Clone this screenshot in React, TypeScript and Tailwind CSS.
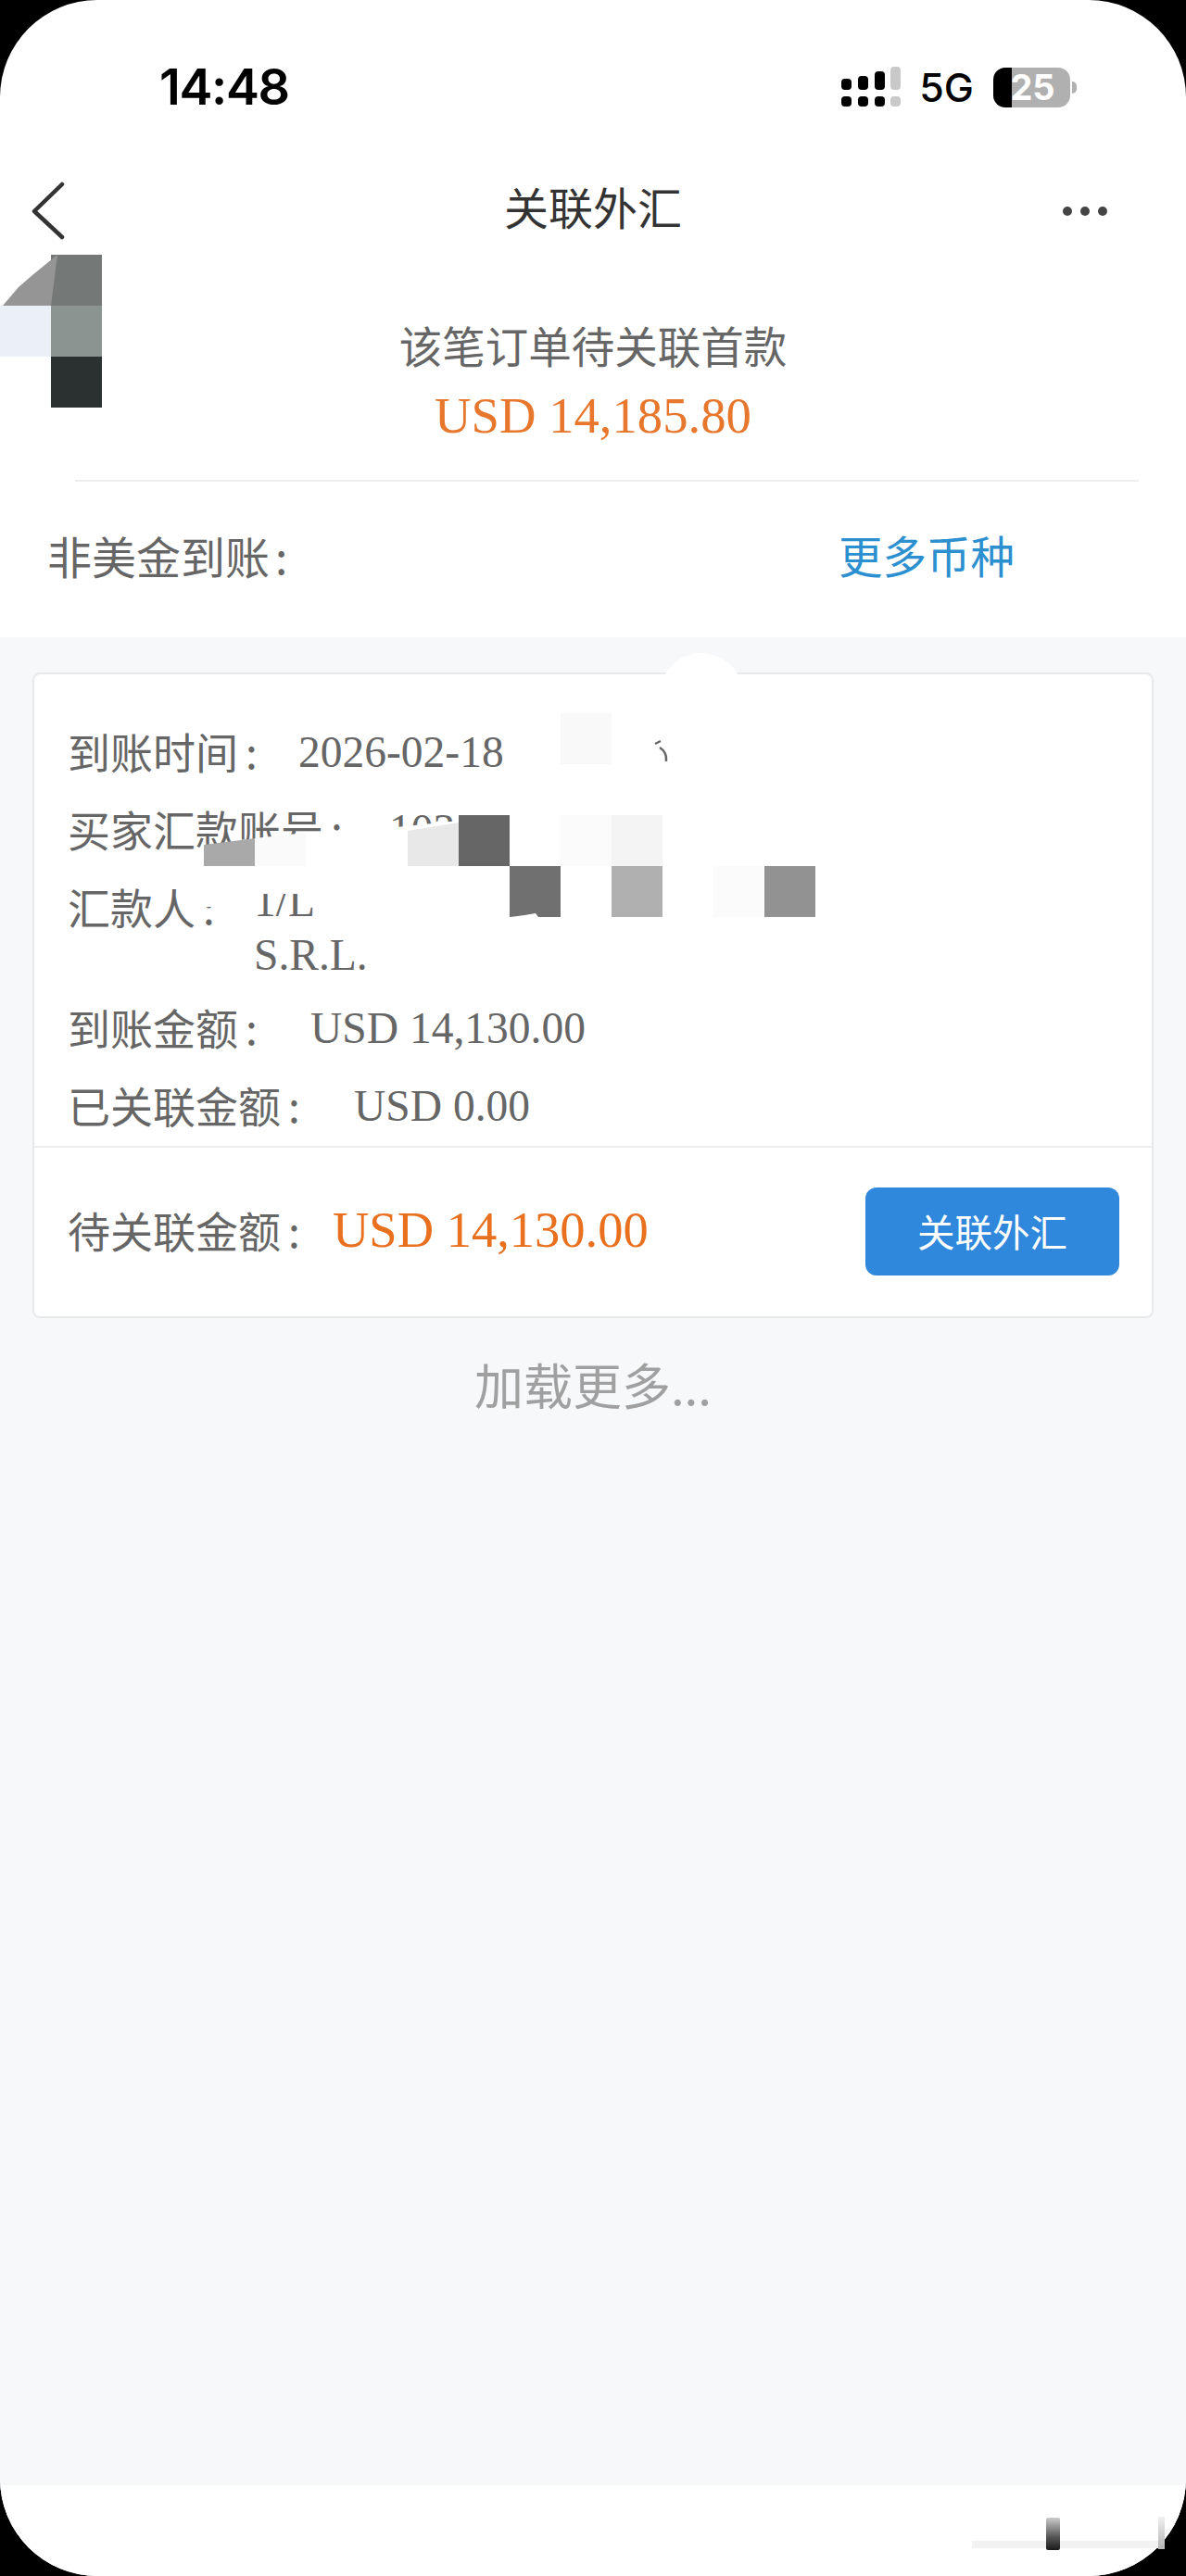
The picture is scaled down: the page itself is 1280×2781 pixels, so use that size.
import { ReactNode } from "react"

const cjk = "font-['Noto_Sans_CJK_SC','Noto_Sans',sans-serif]"
const serif = "font-['Liberation_Serif','Noto_Sans_CJK_SC',serif]"

// redaction blocks from the photo: x, y, fill
const tiles: [number, number, string][] = [
  [55, 275, "#747876"],
  [0, 330, "#ebf0f7"],
  [55, 330, "#8c9492"],
  [55, 385, "#2b3030"],
  [605, 770, "#f9f9f9"],
  [495, 880, "#666666"],
  [605, 880, "#fbfbfb"],
  [660, 880, "#f4f4f4"],
  [550, 935, "#707070"],
  [660, 935, "#b0b0b0"],
  [770, 935, "#fbfbfb"],
  [825, 935, "#929292"]
]

const Redactions = () => (
  <svg
    viewBox="0 0 1280 2781"
    className="absolute inset-0 w-[1280px] h-[2781px] pointer-events-none"
  >
    <defs>
      <linearGradient id="smudge" x1="0" y1="0" x2="0" y2="1">
        <stop offset="0" stopColor="#cccccc" />
        <stop offset="0.6" stopColor="#555555" />
        <stop offset="1" stopColor="#1a1a1a" />
      </linearGradient>
      <linearGradient id="smudgeEdge" x1="0" y1="0" x2="0" y2="1">
        <stop offset="0" stopColor="#f0f0f0" />
        <stop offset="1" stopColor="#b5b5b5" />
      </linearGradient>
    </defs>
    <circle cx="757" cy="750" r="45" fill="#ffffff" />
    <polygon points="216,915 495,886 495,964 216,964" fill="#ffffff" />
    <rect x="216" y="936" width="330" height="29" fill="#ffffff" />
    <rect x="222" y="964" width="20" height="15" fill="#ffffff" />
    {tiles.map(([x, y, fill]) => (
      <rect key={`${x}-${y}`} x={x} y={y} width="55" height="55" fill={fill} />
    ))}
    <polygon points="220,935 220,912 275,905 275,935" fill="#a9a9a9" />
    <polygon points="275,935 275,905 330,899 330,935" fill="#fafafa" />
    <polygon points="440,935 440,897 495,888 495,935" fill="#e8e8e8" />
    <polygon points="3,330 20,310 35,297 62,275 55,330" fill="#959595" />
    <polygon points="551,990 566,988 578,986 581,990" fill="#ffffff" />
    <path d="M707 803 L713 800 M712 807 Q720 812 719 822" stroke="#666666" strokeWidth="2.5" fill="none" />
    <rect x="1049" y="2743" width="208" height="8" fill="#f2f2f2" />
    <rect x="1250" y="2717" width="7" height="35" fill="url(#smudgeEdge)" />
    <rect x="1129" y="2718" width="15" height="35" rx="2" fill="url(#smudge)" />
  </svg>
)

const SignalIcon = () => (
  <svg width="64" height="44" viewBox="0 0 64 44">
    <rect x="0" y="13" width="11" height="12" rx="4" fill="#000" />
    <rect x="18" y="10" width="11" height="15" rx="4" fill="#000" />
    <rect x="36" y="5" width="11" height="20" rx="4" fill="#000" />
    <rect x="53" y="0" width="11" height="25" rx="4" fill="#c9c9c9" />
    <rect x="0" y="32" width="11" height="11" rx="4" fill="#000" />
    <rect x="18" y="32" width="11" height="11" rx="4" fill="#000" />
    <rect x="36" y="32" width="11" height="11" rx="4" fill="#000" />
    <rect x="53" y="32" width="11" height="11" rx="4" fill="#c9c9c9" />
  </svg>
)

const Battery = () => (
  <div className="flex items-center gap-[2px]">
    <div className="flex items-center justify-center w-[83px] h-[43px] rounded-[13px] overflow-hidden bg-[#b0b0b0] border-l-[20px] border-black">
      <span className="text-white font-['Inter',sans-serif] font-bold text-[38px] leading-none -ml-[18px]">
        25
      </span>
    </div>
    <div className="w-[5px] h-[13px] rounded-r-full bg-[#b0b0b0]" />
  </div>
)

const Row = ({
  label,
  labelWidth,
  children
}: {
  label: string
  labelWidth: string
  children: ReactNode
}) => (
  <div className={`flex items-start min-h-[60px] text-[46px] leading-[54px] text-[#666666] ${cjk}`}>
    <span className={`${labelWidth} shrink-0 whitespace-nowrap`}>
      {label}
      <span className="ml-[8px]">:</span>
    </span>
    {children}
  </div>
)

const Value = ({ children }: { children: ReactNode }) => (
  <span className={`${serif} text-[47.5px] leading-[58px] whitespace-nowrap`}>{children}</span>
)

export default function App() {
  return (
    <div className="relative w-[1280px] h-[2781px] bg-black overflow-hidden">
      <div className={`flex flex-col w-full h-full bg-white rounded-[105px] overflow-hidden ${cjk}`}>
        <div className="flex items-center h-[188px] shrink-0 pl-[172px] pr-[118px]">
          <span className="font-['Inter',sans-serif] font-semibold text-[54px] leading-none text-black tracking-tight">
            14:48
          </span>
          <div className="flex items-center ml-auto">
            <SignalIcon />
            <span className="ml-[20px] mr-[21px] font-['Inter',sans-serif] font-medium text-[43px] leading-none text-black">
              5G
            </span>
            <Battery />
          </div>
        </div>

        <div className="relative flex items-center justify-center h-[78px] pb-[10px] shrink-0">
          <svg
            width="40"
            height="66"
            viewBox="0 0 40 66"
            className="absolute left-[32px] top-[7px]"
          >
            <path d="M35 4 L5 33 L35 61" fill="none" stroke="#333333" strokeWidth="4.5" strokeLinecap="round" strokeLinejoin="round" />
          </svg>
          <h1 className="text-[48px] leading-[60px] text-[#333333] font-normal">关联外汇</h1>
          <div className="absolute right-[85px] top-[35px] flex gap-[9px]">
            <span className="w-[10px] h-[10px] rounded-full bg-[#444444]" />
            <span className="w-[10px] h-[10px] rounded-full bg-[#444444]" />
            <span className="w-[10px] h-[10px] rounded-full bg-[#444444]" />
          </div>
        </div>

        <div className="flex flex-col items-center pt-[76px] pb-[39px] shrink-0">
          <p className="text-[46.5px] leading-[60px] text-[#666666]">该笔订单待关联首款</p>
          <p className={`mt-[17px] text-[54.7px] leading-[60px] text-[#e8772e] ${serif}`}>USD 14,185.80</p>
        </div>

        <div className="flex items-center h-[170px] pb-[10px] shrink-0 ml-[81px] mr-[51px] border-t-2 border-[#eeeeee]">
          <span className="-ml-[30px] w-[854px] shrink-0 text-[48px] leading-[60px] text-[#666666]">
            非美金到账<span className="ml-[6px]">:</span>
          </span>
          <span className="text-[47.5px] leading-[60px] text-[#2b8fd0]">更多币种</span>
        </div>

        <div className="flex-1 bg-[#f7f8fa] pt-[38px] px-[35px]">
          <div className="bg-white border-2 border-[#e8e9eb] rounded-[8px]">
            <div className="flex flex-col gap-[24px] pt-[55px] pb-[12px] pl-[36px] pr-[35px]">
              <Row label="到账时间" labelWidth="w-[249px]">
                <Value>2026-02-18</Value>
              </Row>
              <Row label="买家汇款账号" labelWidth="w-[347px]">
                <Value>1031</Value>
              </Row>
              <Row label="汇款人" labelWidth="w-[201px]">
                <span className={`${serif} text-[47.5px] leading-[58px] -mt-[7px] -mb-[3px] whitespace-pre-line`}>
                  {"1/L\nS.R.L."}
                </span>
              </Row>
              <Row label="到账金额" labelWidth="w-[262px]">
                <Value>USD 14,130.00</Value>
              </Row>
              <Row label="已关联金额" labelWidth="w-[309px]">
                <Value>USD 0.00</Value>
              </Row>
            </div>

            <div className="flex items-center justify-between h-[184px] pl-[36px] pr-[35px] border-t-2 border-[#eeeeee]">
              <div className="flex items-center pb-[4px] text-[46px] leading-[60px] text-[#666666]">
                <span className="w-[286px] pb-[2px] shrink-0 whitespace-nowrap">
                  待关联金额<span className="ml-[8px]">:</span>
                </span>
                <span className={`text-[54.5px] text-[#e8701e] ${serif}`}>USD 14,130.00</span>
              </div>
              <button className="w-[274px] h-[95px] mb-[2px] rounded-[12px] bg-[#2f88dc] text-white text-[40.5px]">
                关联外汇
              </button>
            </div>
          </div>

          <p className="mt-[36px] text-center text-[53px] leading-[70px] text-[#a0a0a0]">加载更多...</p>
        </div>

        <div className="h-[98px] shrink-0 bg-white" />
      </div>
      <Redactions />
    </div>
  )
}
